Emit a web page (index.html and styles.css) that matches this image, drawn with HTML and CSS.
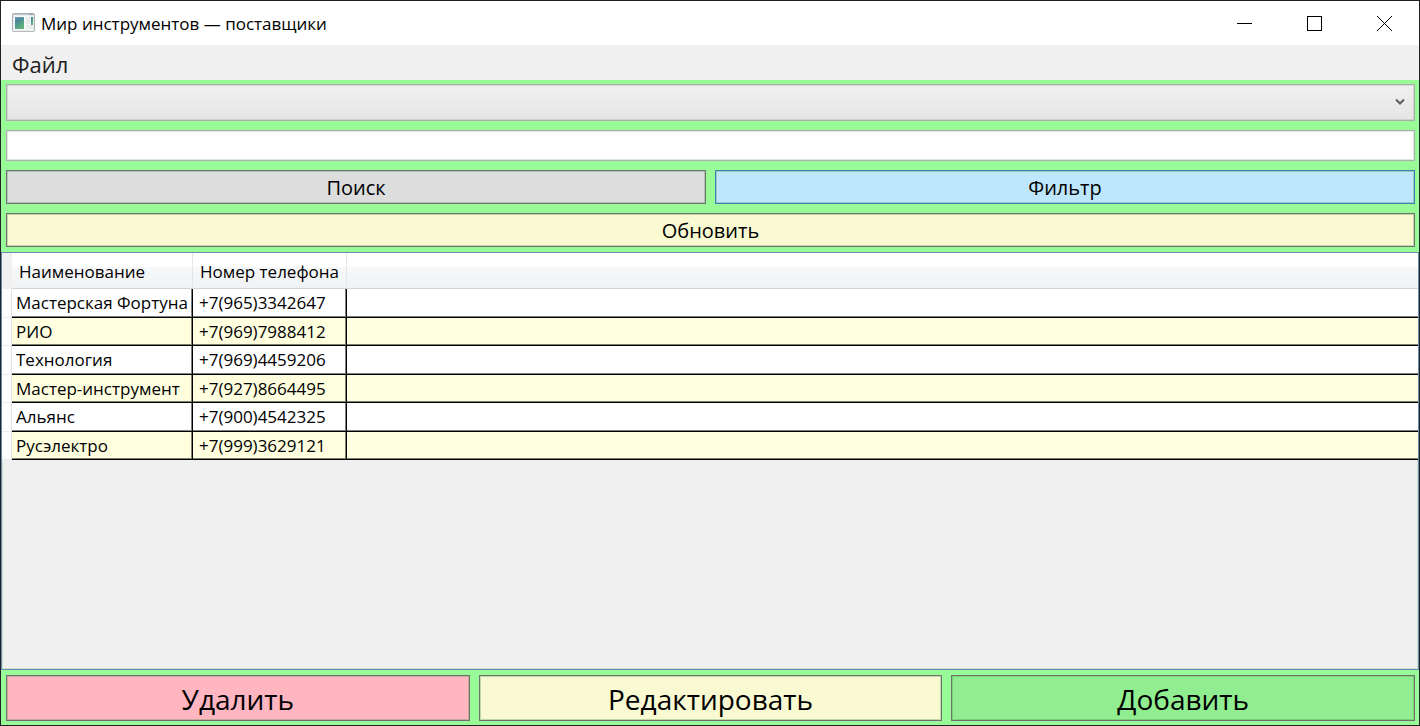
FILE: index.html
```html
<!DOCTYPE html>
<html lang="ru">
<head>
<meta charset="utf-8">
<title>Мир инструментов — поставщики</title>
<link rel="stylesheet" href="styles.css">
</head>
<body>
<div class="window">
  <header class="titlebar">
    <svg class="app-icon" width="23" height="20" viewBox="0 0 23 20" aria-hidden="true">
      <defs>
        <linearGradient id="pane" x1="0" y1="0" x2="0.6" y2="1">
          <stop offset="0" stop-color="#4173a8"/>
          <stop offset="1" stop-color="#5fb57c"/>
        </linearGradient>
      </defs>
      <rect x="0.5" y="0.5" width="22" height="18" rx="1" fill="#eceeef" stroke="#a9aeb3"/>
      <path d="M1 1.5h21" stroke="#c3c8cd"/>
      <path d="M17 1.5h4" stroke="#8fa3b5"/>
      <rect x="2" y="3" width="19" height="14" fill="#f8f9f9"/>
      <rect x="3" y="4" width="9" height="12" fill="url(#pane)"/>
      <path d="M3 8q4-4 9-3v-1h-9z" fill="#7fa6c9" opacity=".5"/>
      <rect x="14" y="4" width="4" height="7" fill="#e9ebec"/>
      <rect x="14" y="12" width="7" height="4" fill="#e9ebec"/>
      <rect x="19" y="4" width="2" height="8" fill="url(#pane)"/>
      <path d="M1 18.5h21" stroke="#b6babd"/>
    </svg>
    <h1 class="title">Мир инструментов — поставщики</h1>
    <div class="window-controls">
      <button class="control" aria-label="Свернуть"><svg width="15" height="15" viewBox="0 0 15 15"><path d="M0 7.5h15" stroke="#000"/></svg></button>
      <button class="control" aria-label="Развернуть"><svg width="15" height="15" viewBox="0 0 15 15"><rect x="0.5" y="0.5" width="14" height="14" fill="none" stroke="#000"/></svg></button>
      <button class="control" aria-label="Закрыть"><svg width="15" height="15" viewBox="0 0 15 15"><path d="M0 0l15 15M15 0l-15 15" stroke="#000"/></svg></button>
    </div>
  </header>
  <nav class="menubar"><button class="menu-item">Файл</button></nav>
  <main class="content">
    <form class="filters" onsubmit="return false">
      <div class="select-wrap">
        <select class="select" aria-label="Фильтр поставщиков"><option></option></select>
        <svg class="chevron" width="10" height="8" viewBox="0 0 10 8" aria-hidden="true"><path d="M1 1.5l4 4 4-4" fill="none" stroke="#606060" stroke-width="2"/></svg>
      </div>
      <input class="search" type="text" aria-label="Строка поиска">
      <div class="button-row">
        <button class="button gray">Поиск</button>
        <button class="button blue">Фильтр</button>
      </div>
      <button class="button cream">Обновить</button>
    </form>
    <div class="grid">
      <table class="table">
        <colgroup><col class="col-marker"><col class="col-name"><col class="col-phone"><col></colgroup>
        <thead>
          <tr><td class="corner"></td><th scope="col">Наименование</th><th scope="col">Номер телефона</th><td class="head-fill"></td></tr>
        </thead>
        <tbody>
          <tr><td class="marker"></td><td>Мастерская Фортуна</td><td class="phone">+7(965)3342647</td><td></td></tr>
          <tr><td class="marker"></td><td>РИО</td><td class="phone">+7(969)7988412</td><td></td></tr>
          <tr><td class="marker"></td><td>Технология</td><td class="phone">+7(969)4459206</td><td></td></tr>
          <tr><td class="marker"></td><td>Мастер-инструмент</td><td class="phone">+7(927)8664495</td><td></td></tr>
          <tr><td class="marker"></td><td>Альянс</td><td class="phone">+7(900)4542325</td><td></td></tr>
          <tr><td class="marker"></td><td>Русэлектро</td><td class="phone">+7(999)3629121</td><td></td></tr>
        </tbody>
      </table>
    </div>
    <div class="button-row actions">
      <button class="button large pink">Удалить</button>
      <button class="button large cream">Редактировать</button>
      <button class="button large green">Добавить</button>
    </div>
  </main>
</div>
</body>
</html>
```
FILE: styles.css
```css
* {
  box-sizing: border-box;
}

body {
  margin: 0;
  color: #000;
  font-family: "Open Sans", "Noto Sans", sans-serif;
  font-size: 17px;
}

button,
input,
select {
  margin: 0;
  color: inherit;
  font: inherit;
}

.window {
  display: flex;
  flex-direction: column;
  min-height: 100vh;
  border: 1px solid #222;
  background: #98fb98;
}

.titlebar {
  display: flex;
  align-items: center;
  height: 44px;
  padding-left: 11px;
  background: #fff;
}

.app-icon {
  margin-right: 6px;
}

.title {
  flex: 1;
  margin: 0;
  font-size: 17px;
  font-weight: 400;
}

.window-controls {
  display: flex;
  align-self: stretch;
}

.control {
  display: flex;
  align-items: center;
  justify-content: center;
  width: 70px;
  padding: 0;
  border: 0;
  background: none;
}

.menubar {
  display: flex;
  height: 35px;
  background: #f0f0f0;
}

.menu-item {
  padding: 2px 11px 0;
  border: 0;
  background: none;
  color: #212121;
  font-size: 22px;
}

.content {
  display: flex;
  flex: 1;
  flex-direction: column;
}

.filters {
  display: flex;
  flex-direction: column;
  gap: 9px;
  padding: 4px 4px 5px 5px;
}

.select-wrap {
  position: relative;
  display: flex;
}

.select {
  flex: 1;
  height: 37px;
  appearance: none;
  border: 1px solid #acacac;
  border-radius: 0;
  background: linear-gradient(#f0f0f0, #e5e5e5);
  box-shadow: inset 0 0 0 1px rgba(140, 170, 140, 0.3);
}

.chevron {
  position: absolute;
  top: 14px;
  right: 10px;
  pointer-events: none;
}

.search {
  height: 31px;
  padding: 0 6px;
  border: 1px solid #abadb3;
  background: #fff;
  box-shadow: inset 0 0 0 1px rgba(140, 190, 140, 0.3);
}

.button-row {
  display: flex;
  gap: 9px;
}

.button {
  flex: 1 1 0;
  min-height: 34px;
  padding: 2px 4px 0;
  border: 1px solid #707070;
  border-radius: 0;
  box-shadow: inset 0 0 0 1px rgba(90, 150, 90, 0.35);
  font-size: 20px;
  line-height: 30px;
}

.large {
  min-height: 46px;
  font-size: 28px;
  line-height: 42px;
}

.gray {
  background: #ddd;
}

.blue {
  border-color: #3c7fb1;
  background: #bee6fd;
}

.cream {
  background: #fafad2;
}

.pink {
  background: #ffb6c1;
}

.green {
  background: #90ee90;
}

.grid {
  flex: 1;
  border: 1px solid #688caf;
  background: #f0f0f0;
  box-shadow: inset 0 0 0 1px rgba(140, 190, 140, 0.3);
}

.table {
  width: 100%;
  border-collapse: separate;
  border-spacing: 0;
  table-layout: fixed;
}

.col-marker {
  width: 10px;
}

.col-name {
  width: 181px;
}

.col-phone {
  width: 154px;
}

.table th,
.table td {
  padding: 0 0 0 4px;
  line-height: 26px;
  text-align: left;
  white-space: nowrap;
}

.table thead tr {
  height: 36px;
}

.table th,
.table .head-fill {
  padding-top: 3px;
  padding-left: 7px;
  border-right: 1px solid #e4e5e6;
  border-bottom: 1px solid #d5d5d5;
  background: linear-gradient(#fff 40%, #f7f8fa 41%, #f1f2f4);
  font-weight: 400;
}

.table .head-fill {
  border-right: 0;
}

.table .corner {
  background: #f0f0f0;
}

.table tbody tr {
  height: 28px;
  background: #ffffe0;
}

.table tbody tr:nth-child(odd) {
  height: 29px;
  background: #fff;
}

.table tbody td {
  border-right: 1px solid #000;
  border-bottom: 1px solid #000;
  box-shadow: inset -1px -1px 0 rgba(0, 0, 0, 0.5);
}

.table tbody td:last-child {
  border-right: 0;
  box-shadow: inset 0 -1px 0 rgba(0, 0, 0, 0.5);
}

.table tbody .phone {
  padding-left: 6px;
}

.table tbody .marker {
  border-right: 1px solid #e0e3e6;
  border-bottom: 1px solid #ececee;
  background: #fdfdfe;
  box-shadow: none;
}

.actions {
  padding: 5px 4px 4px 5px;
}
```
